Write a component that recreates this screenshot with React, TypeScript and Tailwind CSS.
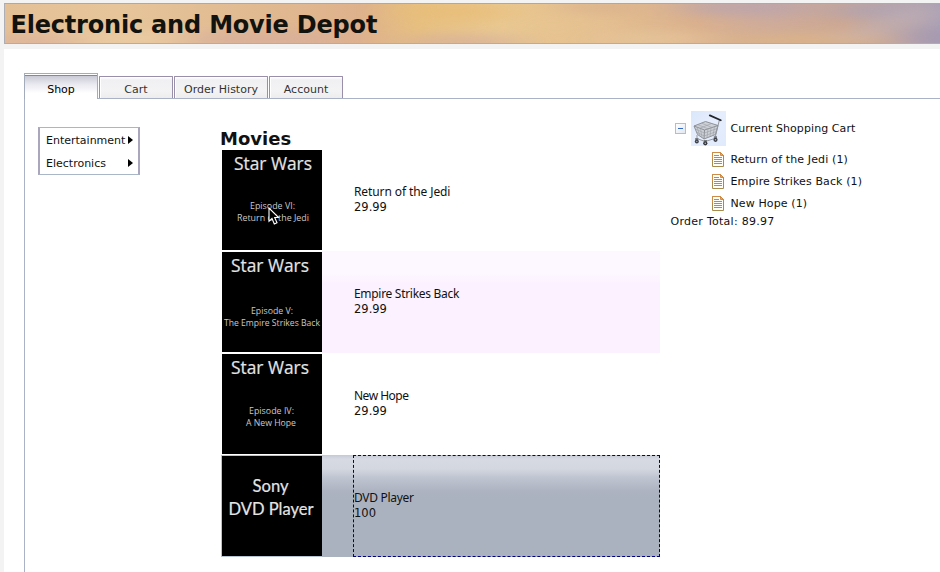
import React from "react";

const UI = "font-['DejaVu_Sans',sans-serif]";

type Line = { text: string; y: number; size: number; x: number; w: number; font?: string };

type Movie = { name: string; price: string; row: string; tracking: string; lines: Line[] };

const movies: Movie[] = [
  {
    name: "Return of the Jedi",
    price: "29.99",
    row: "bg-white",
    tracking: "tracking-[-0.1px]",
    lines: [
      { text: "Star Wars", x: 12, y: 20, size: 18, w: 78 },
      { text: "Episode VI:", x: 28, y: 58.5, size: 8.5, w: 45 },
      { text: "Return of the Jedi", x: 15, y: 70.5, size: 8.5, w: 72 },
    ],
  },
  {
    name: "Empire Strikes Back",
    price: "29.99",
    row: "bg-[linear-gradient(#fdf8ff_0,#fdf8ff_20px,#fcf1ff_34px)]",
    tracking: "tracking-[-0.3px]",
    lines: [
      { text: "Star Wars", x: 9, y: 20, size: 18, w: 78 },
      { text: "Episode V:", x: 29, y: 61.5, size: 8.5, w: 42 },
      { text: "The Empire Strikes Back", x: 2, y: 73.5, size: 8.5, w: 96 },
    ],
  },
  {
    name: "New Hope",
    price: "29.99",
    row: "bg-white",
    tracking: "tracking-[-0.5px]",
    lines: [
      { text: "Star Wars", x: 9, y: 20, size: 18, w: 78 },
      { text: "Episode IV:", x: 27, y: 59.5, size: 8.5, w: 45 },
      { text: "A New Hope", x: 24, y: 71.5, size: 8.5, w: 50 },
    ],
  },
  {
    name: "DVD Player",
    price: "100",
    row: "bg-[linear-gradient(#c4c9d3_0,#d7dae3_4px,#d3d7df_14px,#bec4d0_23px,#adb3c0_36px,#aab2bf_45px)]",
    tracking: "tracking-[-0.3px]",
    lines: [
      { text: "Sony", x: 30.5, y: 36, size: 18, w: 36, font: "Lato" },
      { text: "DVD Player", x: 6.5, y: 59, size: 18, w: 85, font: "Lato" },
    ],
  },
];

function Poster({ lines }: { lines: Line[] }) {
  return (
    <svg width="100" height="100" viewBox="0 0 100 100" className="block shrink-0 bg-black">
      {lines.map((l) => (
        <text
          key={l.text}
          x={l.x}
          y={l.y}
          fontSize={l.size}
          textLength={l.w}
          lengthAdjust="spacingAndGlyphs"
          fill={l.size > 10 ? "#e4e4e4" : "#c8c8c8"}
          stroke={l.size > 10 ? "#e4e4e4" : "none"}
          strokeWidth=".2"
          fontFamily={l.font ? "Lato, sans-serif" : "'Open Sans', sans-serif"}
        >
          {l.text}
        </text>
      ))}
    </svg>
  );
}

function Pointer() {
  return (
    <svg width="12" height="19" viewBox="0 0 12 19" className="absolute left-[46px] top-[57px]">
      <path d="M1 1V14.2L4 11.5L6.3 17L9 15.8L6.7 10.5H10.6Z" fill="#000" stroke="#fff" strokeWidth="1.1" />
    </svg>
  );
}

function DocIcon() {
  return (
    <svg width="13" height="16" viewBox="0 0 13 16" className="shrink-0">
      <path d="M.5.5H8.5L11.5 3.5V14.5H.5Z" fill="#fffef8" stroke="#a98a4e" />
      <path d="M.5 7V.5H8.5L11.5 3.5" fill="none" stroke="#cf8a45" />
      <path d="M8.5.8V3.5H11.2Z" fill="#f1b366" stroke="#c87a30" strokeWidth=".8" />
      <path d="M2 3.5H7M2 5.5H10M2 7.5H10M2 9.5H10M2 11.5H10" stroke="#8b949e" />
    </svg>
  );
}

function CartImage() {
  return (
    <svg width="35" height="35" viewBox="0 0 35 35" className="block shrink-0">
      <defs>
        <linearGradient id="cartBg" x1="0" y1="0" x2="1" y2="1">
          <stop offset="0" stopColor="#d9e6fb" />
          <stop offset=".45" stopColor="#e6eefc" />
          <stop offset="1" stopColor="#dfeafc" />
        </linearGradient>
      </defs>
      <rect width="35" height="35" fill="url(#cartBg)" />
      <path d="M3 15L14.5 10.5L27 14.5L24.5 23.5L13 28L6.5 23.5Z" fill="#cdd1d7" />
      <path d="M3 15L14.5 10.5L27 14.5L13.5 19ZM13.5 19L13 28L24.5 23.5L27 14.5M3 15L6.5 23.5L13 28" fill="none" stroke="#85898f" strokeWidth=".9" />
      <path d="M4.4 18L13.4 22L26.2 17.5M5.4 21L13.2 25L25.4 20.5M6.5 13.6L17 17.8M10.5 12.1L21 16.5M6 16.2L9 25.2M9.5 17.5L11 26.5M17 17.9L16 26.8M20 16.9L19 25.6M23.5 15.7L22 24.5M9 17.2L20.5 12.5" fill="none" stroke="#9a9ea5" strokeWidth=".6" />
      <path d="M28.5 8.5L24.5 25L25.5 27L14 30.5L6 27.5V24" fill="none" stroke="#94979d" strokeWidth="1" />
      <path d="M18.8 4.4L29.8 9.2" stroke="#24262c" strokeWidth="1.8" strokeLinecap="round" />
      <path d="M4.2 28H7.3M12.8 29.8H16M22.8 26.2H26" stroke="#777b82" strokeWidth="1.8" />
      <circle cx="5.8" cy="30.4" r="2" fill="#3e4148" />
      <circle cx="14.3" cy="32.3" r="2.1" fill="#33363d" />
      <circle cx="24.5" cy="28.8" r="2.1" fill="#3b3e45" />
      <circle cx="5.8" cy="30.4" r=".7" fill="#a7abb2" />
      <circle cx="14.3" cy="32.3" r=".8" fill="#b7bac0" />
      <circle cx="24.5" cy="28.8" r=".8" fill="#b7bac0" />
    </svg>
  );
}

const idleTab =
  "h-[22px] rounded-t-[1px] border border-b-0 border-[#9a8faa] bg-[linear-gradient(#fff_0,#f0f0f3_3px,#f3f3f4_14px,#ececee_22px)] pt-[5px] text-center text-[#333] shadow-[inset_1px_1px_0_#fff]";

function Tabs() {
  return (
    <nav className="flex h-[26px] items-end gap-px border-b border-[#a9b2c6] text-[11px] leading-4">
      <div className="-mb-px h-[26px] w-[74px] border border-b-0 border-[#a4abbb] bg-[linear-gradient(#fff_0,#fff_1px,#858895_1px,#858895_2px,#c9cad5_2px,#e8e8ef_10px,#fff_19px)] pt-[8px] text-center text-black">
        Shop
      </div>
      <div className={`${idleTab} w-[74px]`}>Cart</div>
      <div className={`${idleTab} w-[94px]`}>Order History</div>
      <div className={`${idleTab} w-[74px]`}>Account</div>
    </nav>
  );
}

function Menu() {
  return (
    <ul className="mt-[28px] ml-[13px] h-[48px] w-[102px] border-2 border-y border-[#aaa6bd] border-y-[#a9b6c8] bg-white text-[11px]">
      {["Entertainment", "Electronics"].map((item) => (
        <li key={item} className="flex h-[23px] items-center justify-between pr-[5px] pl-[6px]">
          <span className="pt-[3px]">{item}</span>
          <svg width="5" height="8" viewBox="0 0 5 8">
            <path d="M0 0L5 4L0 8Z" />
          </svg>
        </li>
      ))}
    </ul>
  );
}

function Catalog() {
  return (
    <section className="mt-[29px] ml-[81px] w-[439px]">
      <h2 className="-ml-px h-[21px] text-[18px] leading-[22px] font-bold text-[#111]">Movies</h2>
      {movies.map((m, i) => {
        const selected = i === 3;
        return (
          <div key={m.name} className={`flex h-[102px] ${m.row} ${selected ? "border-l border-[#b5c3d5]" : "border-l border-white"}`}>
            <div className={`relative h-[102px] w-[100px] border-y ${selected ? "border-[#b7c4d6]" : "border-white"}`}>
              <Poster lines={m.lines} />
              {i === 0 && <Pointer />}
            </div>
            <div
              className={`ml-[31px] flex w-[307px] flex-col justify-center border border-dashed pb-[2px] text-[12px] leading-[15px] ${
                selected ? "border-[#000080]" : "border-transparent"
              }`}
            >
              <span className={`font-['Noto_Sans',sans-serif] ${m.tracking}`}>{m.name}</span>
              <span className="pt-px text-[11.5px]">{m.price}</span>
            </div>
          </div>
        );
      })}
    </section>
  );
}

function ShoppingCart() {
  return (
    <aside className="mt-[12px] ml-[11px] text-[11px] tracking-[0.12px]">
      <div className="flex h-[35px] items-center pl-[4px]">
        <span className="flex size-[11px] items-center justify-center border border-[#b4bdca] bg-linear-to-br from-white to-[#e3e7f0]">
          <span className="h-px w-[5px] bg-[#3567c4]" />
        </span>
        <span className="ml-[5px]">
          <CartImage />
        </span>
        <span className="ml-[4.5px] pt-[2px] tracking-[0.08px]">Current Shopping Cart</span>
      </div>
      <ul className="mt-[3px]">
        {["Return of the Jedi (1)", "Empire Strikes Back (1)", "New Hope (1)"].map((item) => (
          <li key={item} className="flex h-[22px] items-center gap-[5.5px] pl-[41px]">
            <DocIcon />
            {item}
          </li>
        ))}
      </ul>
      <p className="-mt-px -ml-[0.5px] leading-[15px] tracking-[0.27px]">Order Total: 89.97</p>
    </aside>
  );
}

export default function App() {
  return (
    <div className={`${UI} h-[572px] w-[940px] overflow-hidden bg-[#f3f3f3] pt-[3px] pl-[4px] whitespace-nowrap text-[#111]`}>
      <header className="relative h-[41px] overflow-hidden border border-r-0 border-t-[#a4abb4] border-b-[#c6a69a] border-l-[#adaeb5] bg-[linear-gradient(90deg,#e4c096_0,#e7c59a_12%,#e2bd94_22%,#deb28c_38%,#e6bf80_44%,#e9c891_53%,#e4bf90_64%,#dab08d_74%,#ceab9b_82%,#cda790_90%,#b5a3ac_97%,#aaa0b5_100%)]">
        <svg className="absolute inset-0" width="936" height="39" viewBox="0 0 936 39" preserveAspectRatio="none">
          <defs>
            <filter id="soft" x="-20%" y="-60%" width="140%" height="220%">
              <feGaussianBlur stdDeviation="20 6" />
            </filter>
          </defs>
          <g filter="url(#soft)" opacity=".85">
            <ellipse cx="140" cy="34" rx="90" ry="7" fill="#ebcda5" />
            <ellipse cx="30" cy="38" rx="50" ry="7" fill="#dcb29d" />
            <ellipse cx="260" cy="35" rx="90" ry="8" fill="#d8ae9b" />
            <ellipse cx="450" cy="8" rx="60" ry="8" fill="#e9bd78" />
            <ellipse cx="455" cy="38" rx="70" ry="6" fill="#d6ae9e" />
            <ellipse cx="600" cy="3" rx="50" ry="5" fill="#d8ae8d" />
            <ellipse cx="650" cy="35" rx="60" ry="7" fill="#e7c69b" />
            <ellipse cx="740" cy="3" rx="70" ry="8" fill="#b9a4af" />
            <ellipse cx="800" cy="37" rx="90" ry="9" fill="#dcb488" />
            <ellipse cx="870" cy="6" rx="50" ry="8" fill="#aea3b4" />
            <path d="M830 34L925 2L935 6L845 39Z" fill="#c9b8b8" />
            <ellipse cx="930" cy="34" rx="22" ry="8" fill="#a294ae" />
          </g>
        </svg>
        <h1 className="relative pl-[5.5px] text-[24px] leading-[42px] font-bold tracking-[-0.2px] text-[#12120f]">
          Electronic and Movie Depot
        </h1>
      </header>
      <main className="mt-[5px] h-[523px] bg-white pt-[24px] pl-[20px]">
        <Tabs />
        <div className="flex h-[473px] items-start border-l border-[#a9b2c6]">
          <Menu />
          <Catalog />
          <ShoppingCart />
        </div>
      </main>
    </div>
  );
}
